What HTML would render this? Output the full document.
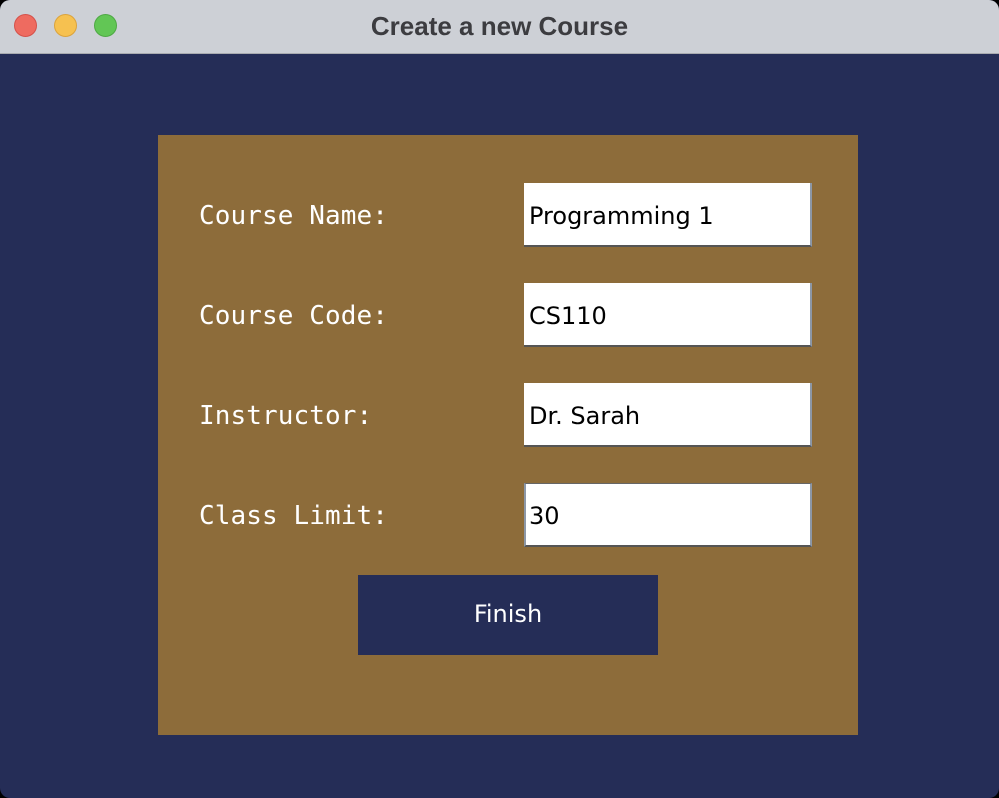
<!DOCTYPE html>
<html><head><meta charset="utf-8"><style>
html,body{margin:0;padding:0;width:999px;height:798px;overflow:hidden;background:#000;}
.win{position:absolute;left:0;top:0;width:999px;height:798px;border-radius:10px;overflow:hidden;background:#252d57;}
.tb{position:absolute;left:0;top:0;width:999px;height:53px;background:#cdd0d6;border-bottom:1px solid #a9abb0;}
.tb .t{position:absolute;left:0;width:999px;top:11px;text-align:center;font:bold 26px "Liberation Sans",sans-serif;color:#3c3c40;}
.d{position:absolute;top:14px;width:23px;height:23px;border-radius:50%;box-sizing:border-box;}
.panel{position:absolute;left:158px;top:135px;width:700px;height:600px;background:#8d6c3a;}
.lab{position:absolute;left:199px;font:26px "DejaVu Sans Mono","Liberation Mono",monospace;color:#fff;letter-spacing:0.1px;}
.in{position:absolute;left:524px;width:288px;height:64px;background:#fff;box-sizing:border-box;border-right:2px solid #8c97a6;border-bottom:2px solid #555;}
.in span{position:absolute;left:5px;top:19px;font:24px "DejaVu Sans","Liberation Sans",sans-serif;color:#000;}
.btn{position:absolute;left:358px;top:575px;width:300px;height:80px;background:#252d57;color:#fff;font:24px "DejaVu Sans","Liberation Sans",sans-serif;text-align:center;line-height:78px;}
</style></head><body>
<div class="win">
<div class="tb"><div class="t">Create a new Course</div>
<div class="d" style="left:14px;background:#ee6b60;border:1px solid #d4514a"></div>
<div class="d" style="left:54px;background:#f6c150;border:1px solid #dba33c"></div>
<div class="d" style="left:94px;background:#62c655;border:1px solid #4ea844"></div>
</div>
<div class="panel"></div>
<div class="lab" style="top:201px">Course Name:</div>
<div class="lab" style="top:301px">Course Code:</div>
<div class="lab" style="top:401px">Instructor:</div>
<div class="lab" style="top:501px">Class Limit:</div>
<div class="in" style="top:183px"><span>Programming 1</span></div>
<div class="in" style="top:283px"><span>CS110</span></div>
<div class="in" style="top:383px"><span>Dr. Sarah</span></div>
<div class="in" style="top:483px;border-left:2px solid #8c97a6;border-top:1px solid #666"><span style="left:3px;top:18px">30</span></div>
<div class="btn">Finish</div>
</div>
</body></html>
